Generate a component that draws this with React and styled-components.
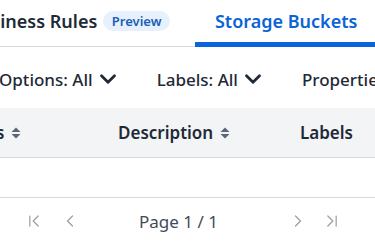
import React from 'react';
import styled, { createGlobalStyle } from 'styled-components';
import { ChevronDown, ChevronFirst, ChevronLast, ChevronLeft, ChevronRight } from 'lucide-react';

const GlobalStyle = createGlobalStyle`
  html, body {
    margin: 0;
    padding: 0;
    background: #ffffff;
    overflow: hidden;
  }
  body {
    font-family: "Noto Sans", "Open Sans", sans-serif;
    color: #1f2a37;
  }
`;

const Page = styled.div`
  width: 600px;
  margin-left: -100px;
`;

const Tabs = styled.nav`
  display: flex;
  align-items: stretch;
  height: 46px;
  padding-left: 48px;
  border-bottom: 1px solid #d5d9de;
`;

const Tab = styled.div`
  display: flex;
  align-items: center;
  gap: 6px;
  padding: 0 ${({ $active }) => ($active ? 20 : 25)}px 0 20px;
  margin-bottom: -1px;
  font-size: 18px;
  font-weight: 600;
  color: ${({ $active }) => ($active ? '#0b63d8' : '#1f2a37')};
  border-bottom: 5px solid ${({ $active }) => ($active ? '#0b64dd' : 'transparent')};
  box-sizing: border-box;
  height: 47px;
  white-space: nowrap;
`;

const Badge = styled.span`
  display: inline-flex;
  align-items: center;
  height: 20px;
  padding: 0 8.5px;
  border-radius: 10px;
  background: #e8f0fb;
  color: #1a5fb8;
  font-size: 13px;
  font-weight: 600;
`;

const Filters = styled.div`
  display: flex;
  align-items: center;
  height: 58px;
  padding: 3px 0 0 99px;
  gap: 36px;
`;

const Filter = styled.button`
  display: flex;
  align-items: center;
  gap: 2px;
  padding: 0;
  border: 0;
  background: none;
  font-family: inherit;
  font-size: 17px;
  font-weight: 500;
  color: #1f2a37;
  white-space: nowrap;
`;

const HeaderRow = styled.div`
  display: grid;
  grid-template-columns: 166px 182px 1fr;
  height: 49px;
  padding-left: 36px;
  background: #f3f4f6;
  border-bottom: 1px solid #d5d9de;
`;

const HeaderCell = styled.div`
  display: flex;
  align-items: center;
  gap: 7px;
  padding-left: 16px;
  font-size: 17px;
  font-weight: 600;
  color: #1f2a37;
  white-space: nowrap;
`;

const EmptyBody = styled.div`
  height: 39px;
  border-bottom: 1px solid #d5d9de;
`;

const Pager = styled.div`
  display: flex;
  align-items: center;
  height: 46px;
  padding-left: 124px;
  color: #9aa0a8;
`;

const PagerButton = styled.span`
  display: flex;
  align-items: center;
  margin-right: ${({ $gap }) => $gap}px;
`;

const PageLabel = styled.span`
  font-size: 17px;
  color: #3f4b5b;
  margin-right: 70px;
`;

function SortIcon() {
  return (
    <svg width="10" height="12" viewBox="0 0 10 12" fill="#5b6676">
      <polygon points="5,0.5 9.5,5 0.5,5" />
      <polygon points="0.5,7 9.5,7 5,11.5" />
    </svg>
  );
}

export default function App() {
  return (
    <>
      <GlobalStyle />
      <Page>
        <Tabs>
          <Tab>
            Business Rules
            <Badge>Preview</Badge>
          </Tab>
          <Tab $active>Storage Buckets</Tab>
        </Tabs>

        <Filters>
          <Filter>
            Options: All
            <ChevronDown size={26} strokeWidth={2.6} />
          </Filter>
          <Filter>
            Labels: All
            <ChevronDown size={26} strokeWidth={2.6} />
          </Filter>
          <Filter>Properties</Filter>
        </Filters>

        <HeaderRow>
          <HeaderCell>
            Status <SortIcon />
          </HeaderCell>
          <HeaderCell>
            Description <SortIcon />
          </HeaderCell>
          <HeaderCell>Labels</HeaderCell>
        </HeaderRow>

        <EmptyBody />

        <Pager>
          <PagerButton $gap={16}>
            <ChevronFirst size={20} strokeWidth={1.5} />
          </PagerButton>
          <PagerButton $gap={59}>
            <ChevronLeft size={20} strokeWidth={1.5} />
          </PagerButton>
          <PageLabel>Page 1 / 1</PageLabel>
          <PagerButton $gap={14}>
            <ChevronRight size={20} strokeWidth={1.5} />
          </PagerButton>
          <PagerButton $gap={0}>
            <ChevronLast size={20} strokeWidth={1.5} />
          </PagerButton>
        </Pager>
      </Page>
    </>
  );
}
